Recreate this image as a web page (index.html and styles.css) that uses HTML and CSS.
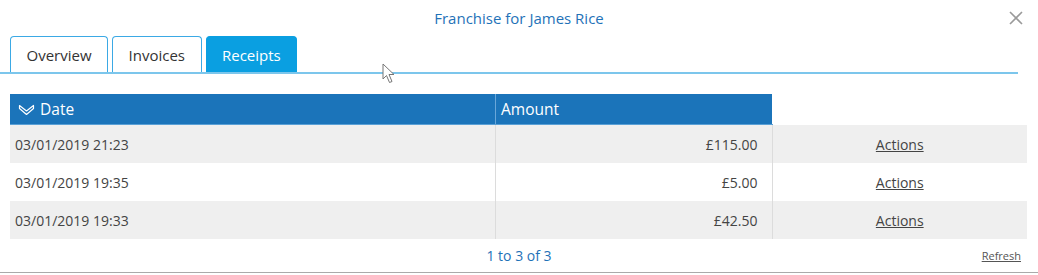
FILE: index.html
```html
<!DOCTYPE html>
<html lang="en">
<head>
    <meta charset="UTF-8">
    <meta name="viewport" content="width=device-width, initial-scale=1.0">
    <title>Franchise for James Rice</title>
    <link rel="stylesheet" href="styles.css">
</head>
<body>
    <div class="dialog">
        <div class="dialog-header">
            <h1 class="dialog-title">Franchise for James Rice</h1>
            <button class="close-button" aria-label="Close">
                <svg width="14" height="14" viewBox="0 0 14 14">
                    <path d="M1 1 L13 13 M13 1 L1 13" stroke="#9a9a9a" stroke-width="1.6" fill="none"/>
                </svg>
            </button>
        </div>

        <div class="tabs">
            <div class="tab">Overview</div>
            <div class="tab">Invoices</div>
            <div class="tab active">Receipts</div>
        </div>

        <table class="grid">
            <thead>
                <tr>
                    <th class="col-date">
                        <svg class="sort-icon" width="17" height="12" viewBox="0 0 17 12">
                            <polygon points="1.5,1.5 8.5,7 15.5,1.5 15.5,4.5 8.5,10.5 1.5,4.5" stroke="#fff" stroke-width="1.2" fill="none" stroke-linejoin="round"/>
                        </svg>
                        Date
                    </th>
                    <th class="col-amount">Amount</th>
                    <th class="col-actions"></th>
                </tr>
            </thead>
            <tbody>
                <tr>
                    <td>03/01/2019 21:23</td>
                    <td class="amount">£115.00</td>
                    <td class="actions"><a href="#">Actions</a></td>
                </tr>
                <tr>
                    <td>03/01/2019 19:35</td>
                    <td class="amount">£5.00</td>
                    <td class="actions"><a href="#">Actions</a></td>
                </tr>
                <tr>
                    <td>03/01/2019 19:33</td>
                    <td class="amount">£42.50</td>
                    <td class="actions"><a href="#">Actions</a></td>
                </tr>
            </tbody>
        </table>

        <div class="grid-footer">
            <span class="paging">1 to 3 of 3</span>
            <a href="#" class="refresh">Refresh</a>
        </div>
    </div>
    <div class="page-edge"></div>

    <!-- mouse pointer captured in the screenshot -->
    <svg class="cursor" width="14" height="21" viewBox="0 0 14 21">
        <path d="M1 1 L1 16 L4.5 12.5 L7.5 19.5 L10 18.5 L7 11.5 L12 11.5 Z" fill="#fff" stroke="#777" stroke-width="1"/>
    </svg>
</body>
</html>
```

FILE: styles.css
```css
body {
    margin: 0;
    font-family: "Open Sans", Arial, sans-serif;
    background-color: #ffffff;
    color: #444;
}

.dialog {
    width: 1038px;
}

.dialog-header {
    height: 36px;
    display: flex;
    justify-content: center;
    align-items: center;
    position: relative;
}

.dialog-title {
    margin: 0;
    font-size: 15px;
    font-weight: normal;
    color: #1f72b8;
}

.close-button {
    position: absolute;
    right: 14px;
    top: 10px;
    border: none;
    background: none;
    padding: 0;
    width: 16px;
    height: 16px;
    display: flex;
    justify-content: center;
    align-items: center;
}

.tabs {
    display: flex;
    gap: 4px;
    padding-left: 10px;
    width: 1008px;
    border-bottom: 2px solid #7cc6ec;
}

.tab {
    height: 35px;
    padding: 0 15.5px;
    display: flex;
    align-items: center;
    font-size: 15px;
    color: #333;
    border: 1px solid #3ba9e5;
    border-bottom: none;
    border-radius: 4px 4px 0 0;
}

.tab.active {
    background-color: #0a9fe1;
    border-color: #0a9fe1;
    color: #ffffff;
}

/* Grid */
.grid {
    margin: 20px 11px 0 10px;
    width: 1017px;
    border-collapse: collapse;
    font-size: 14px;
}

.grid th {
    height: 30px;
    padding: 0 5px;
    text-align: left;
    font-weight: normal;
    font-size: 15.5px;
    color: #ffffff;
    background-color: #1b74ba;
    border-bottom: 1px solid #5aa0d6;
}

.grid th.col-date {
    width: 472px;
    padding-left: 8px;
    border-right: 1px solid #6aa7d9;
}

.grid th.col-amount {
    width: 266px;
}

.grid th.col-actions {
    background-color: #ffffff;
    border-bottom-color: #ffffff;
}

.sort-icon {
    vertical-align: -1px;
    margin-right: 1px;
}

.grid td {
    height: 38px;
    padding: 0 5px;
    border-right: 1px solid #dcdcdc;
}

.grid td:last-child {
    border-right: none;
}

.grid tbody tr:nth-child(odd) {
    background-color: #efefef;
}

.grid td.amount {
    text-align: right;
    padding-right: 14px;
}

.grid td.actions {
    text-align: center;
}

.grid a {
    color: #444;
}

.grid-footer {
    height: 33px;
    display: flex;
    justify-content: center;
    align-items: center;
    position: relative;
}

.paging {
    font-size: 14px;
    color: #1f72b8;
}

.refresh {
    position: absolute;
    right: 17px;
    top: 9px;
    font-size: 11px;
    color: #555;
}

.page-edge {
    border-top: 1px solid #aaaaaa;
    height: 2px;
}

.cursor {
    position: absolute;
    left: 382px;
    top: 63px;
}
```
